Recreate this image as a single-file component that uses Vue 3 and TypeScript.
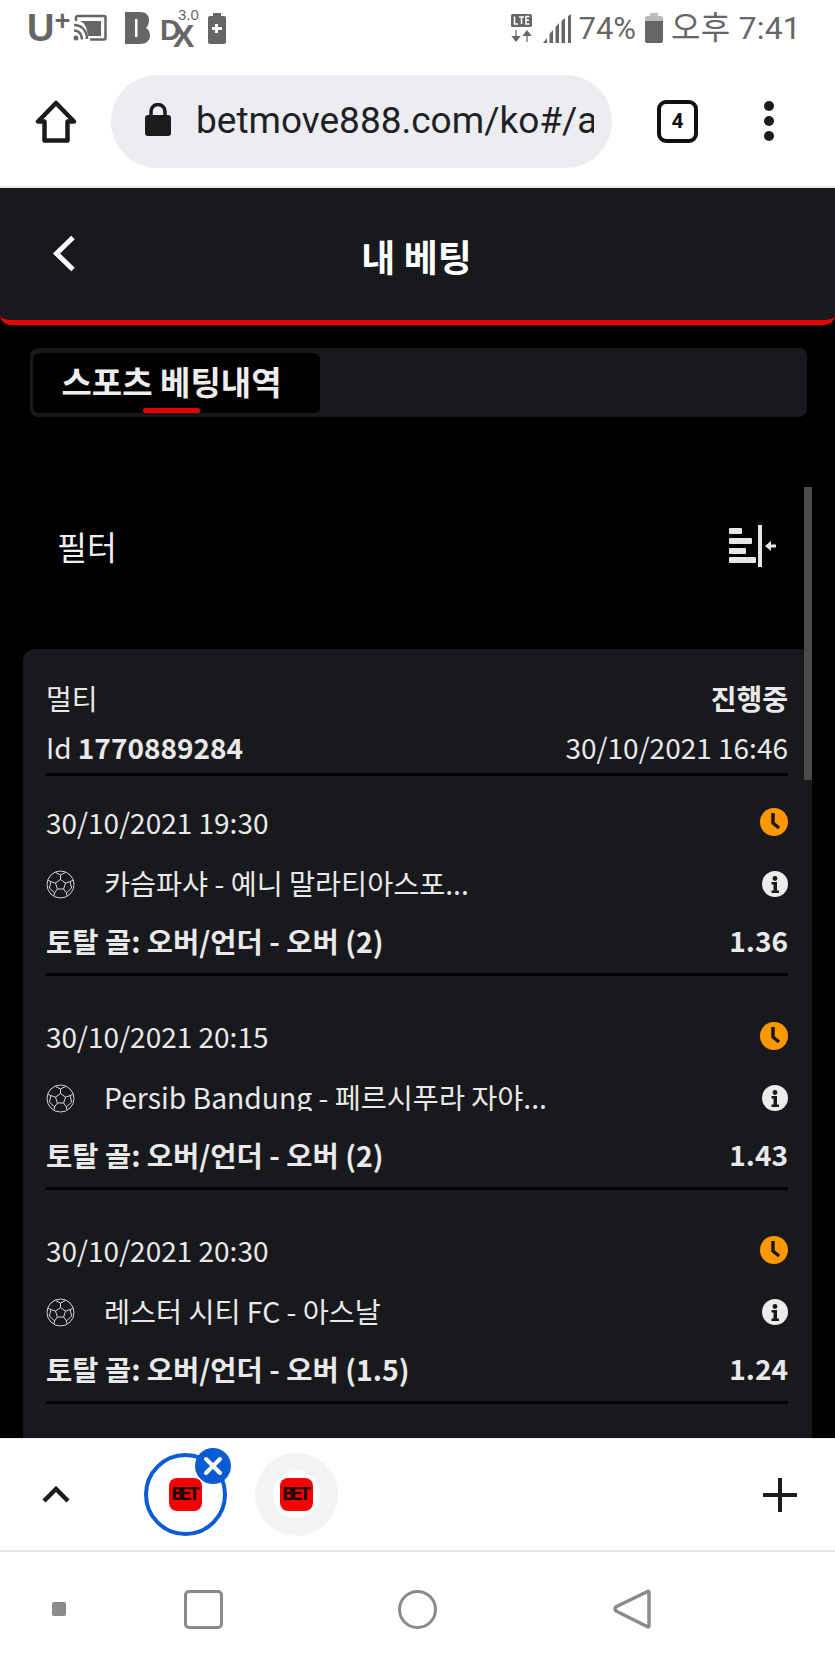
<script setup lang="ts">
interface Bet { date: string; match: string; market: string; odds: string }
const bets: Bet[] = [
  { date: '30/10/2021 19:30', match: '카슴파샤 - 예니 말라티아스포...', market: '토탈 골: 오버/언더 - 오버 (2)', odds: '1.36' },
  { date: '30/10/2021 20:15', match: 'Persib Bandung - 페르시푸라 자야...', market: '토탈 골: 오버/언더 - 오버 (2)', odds: '1.43' },
  { date: '30/10/2021 20:30', match: '레스터 시티 FC - 아스날', market: '토탈 골: 오버/언더 - 오버 (1.5)', odds: '1.24' },
]
</script>

<template>
  <div class="phone">
    <div class="status">
      <div class="status-left">
        <span class="uplus">U<sup>+</sup></span>
        <svg class="ic-cast" width="34" height="28" viewBox="0 0 34 28">
          <path d="M3 7V3.500A1.500 1.500 0 0 1 4.500 2H31a1.500 1.500 0 0 1 1.500 1.500V24a1.500 1.500 0 0 1-1.500 1.500H17" fill="none" stroke="#666" stroke-width="2.500"/>
          <path d="M7 7h21v15H15C14 14 12 9 7 7z" fill="#666"/>
          <path d="M1 11c8 0 13 6 13 14M1 16.500c5 0 8 4 8 9" fill="none" stroke="#666" stroke-width="2.500"/>
          <circle cx="3" cy="24" r="2.500" fill="#666"/>
        </svg>
        <svg class="ic-b" width="25" height="32" viewBox="0 0 25 32">
          <path fill-rule="evenodd" d="M0 0h15c6 0 9 3 9 8 0 3.500-1 6-3 8 2.500 1.500 4 4 4 7.500 0 5.500-4 8.500-10 8.500H0zM10 7v18h2.500V7z" fill="#666"/>
        </svg>
        <span class="dx"><span class="dx-d">D</span><span class="dx-x">X</span><span class="dx-3">3.0</span></span>
        <svg class="ic-bat" width="18" height="31" viewBox="0 0 18 31">
          <path fill-rule="evenodd" d="M5 0h8v3h3a2 2 0 0 1 2 2v24a2 2 0 0 1-2 2H2a2 2 0 0 1-2-2V5a2 2 0 0 1 2-2h3zM7 11v3H4v3h3v3h3v-3h4v-3h-4v-3z" fill="#666"/>
        </svg>
      </div>
      <div class="status-right">
        <svg class="ic-lte" width="24" height="30" viewBox="0 0 24 30">
          <rect x="1" y="1" width="21" height="13" rx="1.500" fill="#666"/>
          <path d="M4.500 3.500v7.500h3.500M9 4h5M11.500 4v7M19.500 3.500h-3.500v7.500h3.500M16 7.200h3" fill="none" stroke="#fff" stroke-width="1.500"/>
          <path d="M6 17v10M2.500 23.500L6 28l3.500-4.500zM17 29V19M13.500 22.500L17 18l3.500 4.500z" fill="#666" stroke="#666" stroke-width="1.200"/>
        </svg>
        <svg class="ic-sig" width="29" height="29" viewBox="0 0 29 29">
          <path d="M0 29l4-5v5zM6.500 29V20l3.500-4v13zM12.500 29V13l3.500-4v20zM18.500 29V7l3.500-3v25zM25 29V2l3-2v29z" fill="#666"/>
        </svg>
        <span class="pct">74%</span>
        <svg class="ic-batt" width="18" height="30" viewBox="0 0 18 30">
          <path d="M5 0h8v3h3a2 2 0 0 1 2 2v3H0V5a2 2 0 0 1 2-2h3z" fill="#bbb"/>
          <path d="M0 8h18v20a2 2 0 0 1-2 2H2a2 2 0 0 1-2-2z" fill="#666"/>
        </svg>
        <span class="clock">오후 7:41</span>
      </div>
    </div>

    <div class="toolbar">
      <svg class="ic-home" width="42" height="43" viewBox="0 0 42 43">
        <path d="M21 3L3 21.500h6.500V40.500h23V21.500H39z" fill="none" stroke="#1c1c1e" stroke-width="4.500" stroke-linejoin="round"/>
      </svg>
      <div class="pill">
        <svg class="ic-lock" width="26" height="33" viewBox="0 0 26 33">
          <path d="M6 13V8.500a7 7 0 0 1 14 0V13" fill="none" stroke="#1c1c1e" stroke-width="3.500"/>
          <rect y="12" width="26" height="21" rx="3" fill="#1c1c1e"/>
        </svg>
        <span class="url">betmove888.com/ko#/a</span>
      </div>
      <div class="tabcount">4</div>
      <div class="dots"><i></i><i></i><i></i></div>
    </div>

    <div class="page">
      <header class="head">
        <svg class="ic-back" width="24" height="37" viewBox="0 0 24 37">
          <path d="M21 2.500L4.500 18.500 21 34.500" fill="none" stroke="#fff" stroke-width="5"/>
        </svg>
        <h1>내 베팅</h1>
      </header>

      <div class="tabs">
        <div class="tab">스포츠 베팅내역<span class="tab-mark"></span></div>
      </div>

      <div class="filter">
        <span>필터</span>
        <svg class="ic-filter" width="47" height="43" viewBox="0 0 47 43">
          <g fill="#e6e6e6">
            <rect x="0" y="3" width="13" height="6" rx="1"/>
            <rect x="0" y="13" width="23" height="6" rx="1"/>
            <rect x="0" y="23" width="17" height="6" rx="1"/>
            <rect x="0" y="32" width="27" height="6" rx="1"/>
            <rect x="29" y="0" width="4" height="42"/>
            <path d="M36 21l6-5v3.500h5v3h-5V26z"/>
          </g>
        </svg>
      </div>

      <section class="card">
        <div class="card-head">
          <div class="line"><span>멀티</span><b>진행중</b></div>
          <div class="line"><span>Id <b>1770889284</b></span><span>30/10/2021 16:46</span></div>
        </div>
        <div v-for="bet in bets" :key="bet.date" class="bet">
          <div class="line date">
            <span>{{ bet.date }}</span>
            <svg class="ic-clock" width="28" height="28" viewBox="0 0 28 28">
              <circle cx="14" cy="14" r="14" fill="#ff9800"/>
              <path d="M13 5v10l6 5" fill="none" stroke="#18191d" stroke-width="3.500"/>
            </svg>
          </div>
          <div class="line match">
            <svg class="ic-ball" width="29" height="29" viewBox="0 0 29 29">
              <g fill="none" stroke="#d8d8d8" stroke-width="1">
                <circle cx="14.500" cy="14.500" r="13.500"/>
                <path d="M14.500 9.500l5 3.600-1.900 5.900h-6.200l-1.900-5.900z"/>
                <path d="M14.500 9.500V5M19.500 13.100l4.600-1.500M17.600 19l2.800 3.900M11.400 19l-2.800 3.900M9.500 13.100L4.900 11.600"/>
                <path d="M9.500 2.500l5 2.500 5-2.500M24.100 11.600l3-1.500M24.100 11.600l1.500 6.500-5.200 4.800 .5 2.700M8.600 22.900l-5.200-4.800 1.500-6.500-3-1.500M8.600 22.900l-.5 2.700"/>
              </g>
            </svg>
            <span class="team">{{ bet.match }}</span>
            <svg class="ic-info" width="26" height="26" viewBox="0 0 26 26">
              <circle cx="13" cy="13" r="13" fill="#ececec"/>
              <circle cx="13" cy="7.500" r="2.400" fill="#18191d"/>
              <path d="M9.500 11h5.500v8.500h2V22H9.500v-2.500h2V13.500h-2z" fill="#18191d"/>
            </svg>
          </div>
          <div class="line market"><b>{{ bet.market }}</b><b class="odds">{{ bet.odds }}</b></div>
        </div>
      </section>

      <div class="scrollbar"></div>
    </div>

    <div class="tabstrip">
      <svg class="ic-up" width="28" height="17" viewBox="0 0 28 17">
        <path d="M2 15L14 3l12 12" fill="none" stroke="#1c1c1e" stroke-width="4.500"/>
      </svg>
      <div class="bubble active">
        <span class="bet-logo">BET</span>
        <span class="close">
          <svg width="20" height="20" viewBox="0 0 20 20"><path d="M3 3l14 14M17 3L3 17" stroke="#fff" stroke-width="4" stroke-linecap="round"/></svg>
        </span>
      </div>
      <div class="bubble idle"><span class="inner"><span class="bet-logo">BET</span></span></div>
      <svg class="ic-plus" width="34" height="34" viewBox="0 0 34 34">
        <path d="M17 0v34M0 17h34" stroke="#1c1c1e" stroke-width="4"/>
      </svg>
    </div>

    <nav class="nav">
      <span class="nav-dot"></span>
      <span class="nav-square"></span>
      <span class="nav-circle"></span>
      <svg width="38" height="42" viewBox="0 0 38 42">
        <path d="M34.500 3.500c.5-.6 1.500-.2 1.500 .6v34c0 .8-1 1.200-1.500 .6L3 23c-1.300-1.200-1.300-3 0-4.200z" fill="none" stroke="#8a8a8a" stroke-width="3.500" stroke-linejoin="round"/>
      </svg>
    </nav>
  </div>
</template>

<style>
html, body { margin: 0; background: #fff; }
</style>

<style scoped>
.phone {
  width: 835px;
  height: 1670px;
  display: flex;
  flex-direction: column;
  overflow: hidden;
  background: #fff;
  font-family: "Noto Sans CJK KR", "Noto Sans", sans-serif;
}
.status {
  height: 56px;
  flex: none;
  padding: 0 34px 0 27px;
  display: flex;
  justify-content: space-between;
  align-items: center;
  color: #666;
  font-family: Roboto, "Noto Sans CJK KR", sans-serif;
}
.status-left, .status-right { display: flex; align-items: center; }
.uplus {
  width: 46px;
  font: 700 38px/1 "Liberation Sans", sans-serif;
}
.uplus sup { font-size: 27px; line-height: 0; vertical-align: 11px; }
.ic-b { margin-left: 18px; }
.dx {
  position: relative;
  width: 36px;
  height: 34px;
  margin-left: 10px;
  font-family: "Liberation Sans", sans-serif;
  font-weight: 700;
}
.dx-d { position: absolute; left: 0; top: 5px; font-size: 29px; line-height: 1; }
.dx-x { position: absolute; left: 13px; top: 9px; font-size: 32px; line-height: 1; }
.dx-3 { position: absolute; left: 18px; top: -4px; font-size: 15px; line-height: 1; font-weight: 400; }
.ic-bat { margin-left: 12px; }
.ic-sig { margin-left: 9px; }
.pct { margin-left: 7px; font-size: 31px; line-height: 1; }
.ic-batt { margin-left: 9px; }
.clock { margin-left: 8px; font-size: 32px; line-height: 1; letter-spacing: .2px; }

.toolbar {
  height: 132px;
  flex: none;
  box-sizing: border-box;
  display: flex;
  align-items: center;
  padding: 0 0 0 35px;
  border-bottom: 2px solid #e9e9e9;
}
.ic-home { flex: none; }
.pill {
  width: 501px;
  height: 93px;
  margin-left: 34px;
  box-sizing: border-box;
  background: #ebedf0;
  border-radius: 47px;
  display: flex;
  align-items: center;
  padding: 0 18px 0 34px;
}
.ic-lock { flex: none; margin-top: -4px; }
.url {
  margin-left: 25px;
  width: 398px;
  overflow: hidden;
  white-space: nowrap;
  font: 400 37px/1.2 Roboto, sans-serif;
  color: #202124;
}
.tabcount {
  width: 41px;
  height: 43px;
  margin-left: 45px;
  box-sizing: border-box;
  border: 4.500px solid #111;
  border-radius: 9px;
  display: flex;
  align-items: center;
  justify-content: center;
  font: 700 21px/1 Roboto, sans-serif;
  color: #111;
}
.dots { margin-left: 66px; display: flex; flex-direction: column; gap: 5px; }
.dots i { width: 10px; height: 10px; border-radius: 50%; background: #1c1c1e; }

.page {
  position: relative;
  flex: 1;
  min-height: 0;
  overflow: hidden;
  background: #000;
  color: #e9e9e9;
  display: flex;
  flex-direction: column;
}
.head {
  height: 137px;
  flex: none;
  box-sizing: border-box;
  background: #18191d;
  border-bottom: 5px solid #e90000;
  border-radius: 0 0 10px 10px;
  position: relative;
  display: flex;
  justify-content: center;
  padding-top: 43px;
}
.head h1 {
  margin: 0;
  font-size: 37px;
  font-weight: 700;
  line-height: 50px;
  color: #fff;
  margin-left: -2px;
}
.ic-back { position: absolute; left: 52px; top: 47px; }
.tabs {
  margin: 23px 28px 0 30px;
  height: 69px;
  flex: none;
  box-sizing: border-box;
  background: #18191d;
  border-radius: 8px;
  padding: 5px 3px;
}
.tab {
  position: relative;
  width: 287px;
  height: 60px;
  box-sizing: border-box;
  padding-right: 10px;
  background: #000;
  border-radius: 6px;
  font-size: 33px;
  font-weight: 700;
  line-height: 57px;
  text-align: center;
  color: #eee;
  white-space: nowrap;
}
.tab-mark {
  position: absolute;
  left: 110px;
  bottom: 0;
  width: 57px;
  height: 5px;
  border-radius: 3px;
  background: #e90000;
}
.filter {
  height: 232px;
  flex: none;
  box-sizing: border-box;
  padding: 26px 59px 0 57px;
  display: flex;
  align-items: center;
  justify-content: space-between;
  font-size: 32.500px;
  line-height: 44px;
  color: #f0f0f0;
}
.card {
  margin: 0 23px;
  padding: 0 24px 0 23px;
  background: #18191d;
  border-radius: 12px 12px 0 0;
  font-size: 28px;
  flex: 1;
  min-height: 0;
}
.card b { font-weight: 700; }
.line { display: flex; justify-content: space-between; align-items: center; }
.card-head { padding-top: 24px; border-bottom: 3px solid #000; height: 100px; }
.card-head .line { height: 49px; line-height: 40px; }
.bet { border-bottom: 3px solid #000; margin-bottom: 14px; height: 197px; }
.bet:last-child { margin-bottom: 0; }
.date { height: 79px; padding-top: 13px; box-sizing: border-box; }
.match { height: 58px; justify-content: flex-start; }
.market { height: 60px; padding-bottom: 6px; box-sizing: border-box; font-size: 28.500px; }
.odds { font-size: 28px; }
.team {
  margin: 0 0 6px 29px;
  flex: 1;
  height: 32px;
  line-height: 36px;
  font-size: 28.300px;
  overflow: hidden;
  white-space: nowrap;
}
.ic-ball, .ic-info, .ic-clock { flex: none; }
.scrollbar {
  position: absolute;
  right: 23px;
  top: 299px;
  width: 8px;
  height: 293px;
  background: #4a4a4a;
}

.tabstrip {
  height: 114px;
  flex: none;
  box-sizing: border-box;
  display: flex;
  align-items: center;
  padding: 0 38px 0 42px;
  border-bottom: 2px solid #e2e2e2;
  border-top: 1px solid #f0f0f0;
}
.bubble {
  position: relative;
  width: 83px;
  height: 83px;
  box-sizing: border-box;
  border-radius: 50%;
  display: flex;
  align-items: center;
  justify-content: center;
  flex: none;
}
.active { margin-left: 74px; border: 4px solid #0b5bd3; }
.idle { margin-left: 28px; background: #f1f3f4; }
.inner {
  width: 47px;
  height: 47px;
  background: #fff;
  border-radius: 50%;
  display: flex;
  align-items: center;
  justify-content: center;
}
.bet-logo {
  width: 33px;
  height: 33px;
  flex: none;
  background: #f60000;
  border-radius: 8px;
  font: 700 20px/33px "Liberation Mono", monospace;
  color: #1a0000;
  text-align: center;
  letter-spacing: -3.500px;
  text-indent: -3px;
}
.close {
  position: absolute;
  top: -9px;
  right: -8px;
  width: 36px;
  height: 36px;
  border-radius: 50%;
  background: #0b5bd3;
  display: flex;
  align-items: center;
  justify-content: center;
}
.ic-plus { margin-left: auto; }
.nav {
  flex: none;
  height: 118px;
  box-sizing: border-box;
  display: flex;
  align-items: center;
  padding: 0 0 4px 52px;
}
.nav-dot { width: 14px; height: 14px; border-radius: 2px; background: #8a8a8a; }
.nav-square {
  width: 39px;
  height: 39px;
  box-sizing: border-box;
  margin-left: 118px;
  border: 3.500px solid #8a8a8a;
  border-radius: 5px;
}
.nav-circle {
  width: 39px;
  height: 39px;
  box-sizing: border-box;
  margin-left: 175px;
  border: 3.500px solid #8a8a8a;
  border-radius: 50%;
}
.nav svg { margin-left: 176px; }
</style>
